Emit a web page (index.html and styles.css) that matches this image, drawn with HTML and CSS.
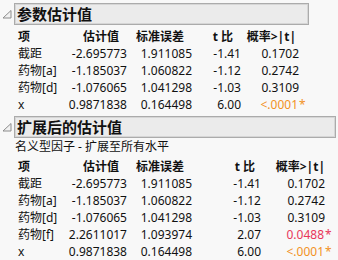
FILE: index.html
```html
<!DOCTYPE html>
<html>
<head>
<meta charset="utf-8">
<link rel="stylesheet" href="styles.css">
</head>
<body>
<div class="report">
  <section class="outline">
    <div class="outline-head">
      <span class="disc"><svg width="10" height="9" viewBox="0 0 10 9"><path d="M1 8 L9 0.5 L9 8 Z" fill="#f2f2f2" stroke="#8c8c8c" stroke-width="1"/></svg></span>
      <div class="title t1">参数估计值</div>
    </div>
    <div class="grid g1">
      <div class="hd lft">项</div>
      <div class="hd p8">估计值</div>
      <div class="hd p8">标准误差</div>
      <div class="hd p8">t 比</div>
      <div class="hd p3">概率&gt;|t|</div>

      <div class="lft">截距</div><div>-2.695773</div><div>1.911085</div><div>-1.41</div><div>0.1702</div>
      <div class="lft">药物[a]</div><div>-1.185037</div><div>1.060822</div><div>-1.12</div><div>0.2742</div>
      <div class="lft">药物[d]</div><div>-1.076065</div><div>1.041298</div><div>-1.03</div><div>0.3109</div>
      <div class="lft">x</div><div>0.9871838</div><div>0.164498</div><div>6.00</div><div class="orange">&lt;.0001<span class="star">*</span></div>
    </div>
  </section>

  <section class="outline">
    <div class="outline-head">
      <span class="disc"><svg width="10" height="9" viewBox="0 0 10 9"><path d="M1 8 L9 0.5 L9 8 Z" fill="#f2f2f2" stroke="#8c8c8c" stroke-width="1"/></svg></span>
      <div class="title t2">扩展后的估计值</div>
    </div>
    <div class="subtitle">名义型因子 - 扩展至所有水平</div>
    <div class="grid g2">
      <div class="hd lft">项</div>
      <div class="hd p8">估计值</div>
      <div class="hd p8">标准误差</div>
      <div class="hd p6">t 比</div>
      <div class="hd">概率&gt;|t|</div>

      <div class="lft">截距</div><div>-2.695773</div><div>1.911085</div><div>-1.41</div><div>0.1702</div>
      <div class="lft">药物[a]</div><div>-1.185037</div><div>1.060822</div><div>-1.12</div><div>0.2742</div>
      <div class="lft">药物[d]</div><div>-1.076065</div><div>1.041298</div><div>-1.03</div><div>0.3109</div>
      <div class="lft">药物[f]</div><div>2.2611017</div><div>1.093974</div><div>2.07</div><div class="red">0.0488<span class="star">*</span></div>
      <div class="lft">x</div><div>0.9871838</div><div>0.164498</div><div>6.00</div><div class="orange">&lt;.0001<span class="star">*</span></div>
    </div>
  </section>
</div>
</body>
</html>
```

FILE: styles.css
```css
html, body {
  margin: 0;
  padding: 0;
  background: #f8f8f8;
}
body {
  font-family: "Noto Sans", "Noto Sans CJK SC", sans-serif;
  font-size: 12px;
  color: #111;
  width: 338px;
  height: 260px;
  overflow: hidden;
}
.report {
  padding-top: 3px;
  display: flex;
  flex-direction: column;
}
.outline + .outline {
  margin-top: 3px;
}
.outline-head {
  display: flex;
  align-items: center;
  height: 22px;
}
.disc {
  width: 14px;
  display: flex;
  justify-content: flex-start;
  padding-left: 2px;
  box-sizing: border-box;
}
.disc svg {
  display: block;
}
.title {
  box-sizing: border-box;
  height: 22px;
  background: #ebebeb;
  border: 1px solid #ababab;
  box-shadow: inset 0 0 0 1px #d6d6d6;
  font-family: "Noto Sans CJK SC", sans-serif;
  font-weight: bold;
  font-size: 15px;
  line-height: 20px;
  padding-left: 2px;
}
.t1 { width: 295px; }
.t2 { width: 322px; }
.subtitle {
  padding-left: 15px;
  line-height: 17px;
  font-family: "Noto Sans", "Noto Sans CJK SC", sans-serif;
}
.grid {
  display: grid;
  margin-left: 18px;
  margin-top: 3px;
  grid-auto-rows: 17px;
  line-height: 17px;
  white-space: nowrap;
}
.g1 { grid-template-columns: 50px 59px 65px 49px 58px; }
.g2 { grid-template-columns: 50px 59px 65px 69px 64px; }
.subtitle + .grid { margin-top: 3px; }
.grid > div {
  text-align: right;
}
.grid > .lft {
  text-align: left;
}
.hd {
  font-weight: bold;
}
.p8 { padding-right: 8px; }
.p6 { padding-right: 6px; }
.p3 { padding-right: 3px; }
.orange { color: #f2921f; }
.red { color: #e8365a; }
.star {
  display: inline-block;
  width: 0;
  overflow: visible;
  padding-left: 1px;
}
```
